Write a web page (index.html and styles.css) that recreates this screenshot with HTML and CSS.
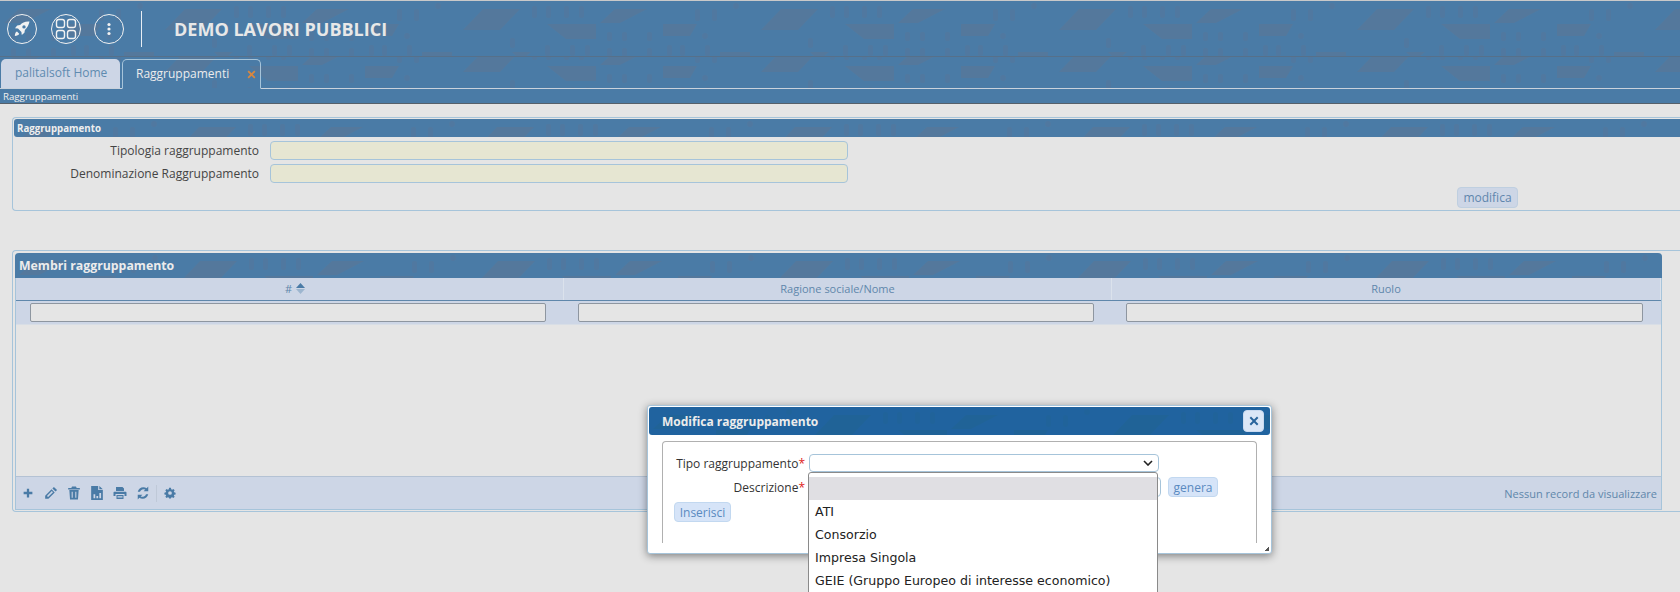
FILE: index.html
```html
<!DOCTYPE html>
<html lang="it">
<head>
<meta charset="utf-8">
<title>Raggruppamenti</title>
<link rel="stylesheet" href="styles.css">
</head>
<body>
<header class="topbar">
  <button class="round-btn" aria-label="Avvia">
    <svg viewBox="0 0 20 20" width="20" height="20"><path class="fill-white" fill-rule="evenodd" d="M17.5 2.5c-4.2-.4-7.2 1-9.4 3.6L5.2 6.6 3 9.2l3 .4 3.400 3.400.4 3 2.600-2.200.5-2.900c2.600-2.200 4-5.200 4.600-8.400zM12 6.200a1.700 1.700 0 1 1 0 3.400 1.700 1.700 0 0 1 0-3.400zM5 12.600c-1.400.6-2 2-2.200 4.400 2.400-.2 3.800-.8 4.400-2.200z"/></svg>
  </button>
  <button class="round-btn" aria-label="Menu">
    <svg viewBox="0 0 24 24" width="24" height="24"><g class="stroke-white"><rect x="2.500" y="2.500" width="8" height="8" rx="2.200"/><rect x="13.500" y="2.500" width="8" height="8" rx="2.200"/><rect x="2.500" y="13.500" width="8" height="8" rx="2.200"/><rect x="13.500" y="13.500" width="8" height="8" rx="2.200"/></g></svg>
  </button>
  <button class="round-btn" aria-label="Altro">
    <svg viewBox="0 0 20 20" width="20" height="20"><g class="fill-white"><circle cx="10" cy="5.500" r="1.600"/><circle cx="10" cy="10" r="1.600"/><circle cx="10" cy="14.500" r="1.600"/></g></svg>
  </button>
  <span class="topbar-divider"></span>
  <h1 class="app-title">DEMO LAVORI PUBBLICI</h1>
</header>

<nav class="tabbar">
  <a class="tab tab-idle">palitalsoft Home</a>
  <a class="tab tab-active">Raggruppamenti <svg class="tab-close" viewBox="0 0 10 10" width="9" height="9"><path d="M2 .6 5 3.600 8 .6 9.400 2 6.400 5l3 3L8 9.400l-3-3-3 3L.6 8l3-3-3-3z"/></svg></a>
</nav>
<div class="subbar">Raggruppamenti</div>

<main class="content">
  <section class="group">
    <div class="group-title">Raggruppamento</div>
    <div class="form-row"><label class="form-label">Tipologia raggruppamento</label><span class="readonly-input"></span></div>
    <div class="form-row"><label class="form-label">Denominazione Raggruppamento</label><span class="readonly-input"></span></div>
    <div class="group-actions"><button class="btn-muted">modifica</button></div>
  </section>

  <section class="grid-frame">
    <div class="grid">
      <div class="grid-title">Membri raggruppamento</div>
      <div class="grid-head">
        <div class="grid-col grid-col-sort"># <svg class="sort" viewBox="0 0 9 11" width="9" height="11"><path class="sort-up" d="M4.500 0 9 5H0z"/><path class="sort-down" d="M0 6h9l-4.500 5z"/></svg></div>
        <div class="grid-col">Ragione sociale/Nome</div>
        <div class="grid-col">Ruolo</div>
      </div>
      <div class="grid-filter">
        <div class="filter-cell"><span class="filter-input"></span></div>
        <div class="filter-cell"><span class="filter-input"></span></div>
        <div class="filter-cell"><span class="filter-input"></span></div>
      </div>
      <div class="grid-body"></div>
      <div class="grid-foot">
        <svg class="tool" viewBox="-2 -2 16 16" width="14" height="14"><path d="M4.700 1h2.600v3.700H11v2.600H7.300V11H4.700V7.300H1V4.700h3.700z"/></svg>
        <svg class="tool" viewBox="0 0 12 12" width="14" height="14"><path fill-rule="evenodd" d="M8.500.8l2.700 2.700-1.300 1.300-2.700-2.700zM6.500 2.800l2.700 2.700L3.800 11H1v-2.700zM2.500 8.500l1 1 4.200-4.200-1-1z"/></svg>
        <svg class="tool" viewBox="0 0 12 12" width="14" height="14"><path d="M4.300.5h3.400l.6 1.200H11v1.200H1V1.700h2.700zM2 3.500h8l-.6 8H2.600zM4 5v5h.9V5zm3.100 0v5H8V5z" fill-rule="evenodd"/></svg>
        <svg class="tool" viewBox="0 0 12 12" width="14" height="14"><path d="M1 0h6v3.500h4V12H1zM8 0l3 2.700H8zM3 7v3.500h1.500V7zm2.500 1.500v2H7v-2zM8 6v4.500h1.500V6z" fill-rule="evenodd"/></svg>
        <svg class="tool" viewBox="0 0 14 14" width="14" height="14"><path d="M3 1h6.500L11 2.500V5H3zM1.500 5.700h11c.6 0 1 .4 1 1V10H11.500V8H2.500v2H.5V6.700c0-.6.4-1 1-1zM3.500 9h7v4h-7zm1 1v.8h5V10zm0 1.400v.7h5v-.7z" fill-rule="evenodd"/></svg>
        <svg class="tool" viewBox="0 0 12 12" width="14" height="14"><path d="M1.500 5C2 2.700 4 1 6.300 1c1 0 2 .3 2.800.9L10.500.5v4h-4L8 3a3.500 3.500 0 0 0-4.600 2zM10.500 7c-.5 2.300-2.500 4-4.800 4-1 0-2-.3-2.800-.9L1.500 11.500v-4h4L4 9a3.500 3.500 0 0 0 4.600-2z"/></svg>
        <span class="tool-sep"></span>
        <svg class="tool" viewBox="-1.500 -1.500 15 15" width="14" height="14"><path d="M5 .5h2l.3 1.500 1 .4L9.600 1.600 11 3 10.100 4.300l.4 1 1.500.3v1.900l-1.500.3-.4 1 .9 1.300L9.600 11.400 8.300 10.500l-1 .4-.3 1.100H5l-.3-1.100-1-.4-1.300.9L1 10.100l.9-1.300-.4-1L0 7.500V5.600l1.500-.3.4-1L1 3 2.400 1.600l1.300.8 1-.4zM6 4a2 2 0 1 0 0 4 2 2 0 0 0 0-4z" fill-rule="evenodd"/></svg>
        <span class="foot-note">Nessun record da visualizzare</span>
      </div>
    </div>
  </section>
</main>

<div class="dialog">
  <div class="dialog-title">
    <span class="dialog-heading">Modifica raggruppamento</span>
    <button class="dialog-close" aria-label="Chiudi"><svg viewBox="0 0 10 10" width="10" height="10"><path d="M2 .6 5 3.600 8 .6 9.400 2 6.400 5l3 3L8 9.400l-3-3-3 3L.6 8l3-3-3-3z"/></svg></button>
  </div>
  <div class="dialog-box">
    <div class="dialog-row">
      <label class="dialog-label">Tipo raggruppamento<em>*</em></label>
      <span class="select-box"><svg viewBox="0 0 10 6" width="10" height="6"><path d="M1 1l4 4 4-4"/></svg></span>
    </div>
    <div class="dialog-row dialog-row-tall">
      <label class="dialog-label">Descrizione<em>*</em></label>
      <span class="text-box"></span>
      <button class="btn-light btn-genera">genera</button>
    </div>
    <div class="dialog-row-plain"><button class="btn-light btn-insert">Inserisci</button></div>
  </div>
  <span class="grip"></span>
  <ul class="dropdown">
    <li class="opt opt-selected">&nbsp;</li>
    <li class="opt">ATI</li>
    <li class="opt">Consorzio</li>
    <li class="opt">Impresa Singola</li>
    <li class="opt">GEIE (Gruppo Europeo di interesse economico)</li>
  </ul>
</div>
</body>
</html>
```
FILE: styles.css
```css
* { box-sizing: border-box; }
html, body { margin: 0; padding: 0; height: 592px; overflow: hidden; }
body {
  position: relative;
  background: #e5e5e5;
  font-family: "Open Sans", "Liberation Sans", sans-serif;
  font-size: 12px;
  color: #444;
}
button { font-family: inherit; cursor: pointer; }
.fill-white { fill: #f2f2f2; }
.stroke-white rect { fill: none; stroke: #f2f2f2; stroke-width: 1.4; }

.topbar, .tabbar, .group-title, .grid-title, .dialog-title {
  background-color: #4a7ba6;
  background-image: url("data:image/svg+xml,%3Csvg xmlns='http://www.w3.org/2000/svg' width='298' height='56'%3E%3Cg fill='%236a7085' fill-opacity='.3'%3E%3Cpath d='M185 8h37l-20 21h-37zM249 23h49v15h-30zM19 8h32L24 22H4zM67 23h34l-7 12H67zM214 51h19l-6 5h-8zM124 51h30v5h-30z'/%3E%3C/g%3E%3Cg fill='%236a7085' fill-opacity='.2'%3E%3Crect x='234' y='5' width='5' height='12' rx='2'/%3E%3Crect x='248' y='5' width='5' height='12' rx='2'/%3E%3Crect x='266' y='5' width='5' height='12' rx='2'/%3E%3Crect x='281' y='5' width='5' height='12' rx='2'/%3E%3Crect x='99' y='8' width='5' height='12' rx='2'/%3E%3Crect x='116' y='8' width='5' height='12' rx='2'/%3E%3Crect x='11' y='31' width='5' height='9' rx='2'/%3E%3Crect x='26' y='31' width='5' height='9' rx='2'/%3E%3Crect x='51' y='31' width='5' height='9' rx='2'/%3E%3Crect x='272' y='44' width='5' height='11' rx='2'/%3E%3Crect x='287' y='44' width='5' height='11' rx='2'/%3E%3Crect x='247' y='44' width='5' height='11' rx='2'/%3E%3Crect x='11' y='47' width='5' height='9' rx='2'/%3E%3Crect x='26' y='47' width='5' height='9' rx='2'/%3E%3Crect x='51' y='47' width='5' height='9' rx='2'/%3E%3Crect x='71' y='44' width='5' height='11' rx='2'/%3E%3Crect x='84' y='44' width='5' height='11' rx='2'/%3E%3Crect x='109' y='44' width='5' height='11' rx='2'/%3E%3Crect x='212' y='37' width='5' height='10' rx='2'/%3E%3Ccircle cx='109' cy='35' r='3'/%3E%3Ccircle cx='140' cy='5' r='3'/%3E%3C/g%3E%3C/svg%3E");
}

.topbar {
  height: 57px;
  border-top: 1px solid #c9c9c9;
  border-bottom: 1px solid #56708a;
  display: flex;
  align-items: center;
  padding-left: 7px;
  gap: 13.5px;
}
.round-btn {
  width: 30px;
  height: 30px;
  border: 1px solid #f2f2f2;
  border-radius: 50%;
  background: transparent;
  padding: 0;
  display: flex;
  align-items: center;
  justify-content: center;
}
.round-btn svg { display: block; }
.topbar-divider { width: 1px; height: 36px; background: #e8eef4; margin-left: 3.5px; }
.app-title {
  margin: 0 0 0 18.5px;
  font-size: 18px;
  font-weight: 700;
  color: #e8e8e8;
}

.tabbar {
  height: 32px;
  background-position: 0 -14px;
  border-bottom: 1px solid #c9d2dc;
  display: flex;
  align-items: flex-end;
  padding-left: 1px;
  gap: 2px;
}
.tab {
  height: 29px;
  border-radius: 5px 5px 0 0;
  font-size: 12px;
  line-height: 28px;
  display: block;
}
.tab-idle { width: 119px; background: #cdd6e6; color: #5f8bb0; padding-left: 14px; }
.tab-active {
  width: 139px;
  margin-bottom: -1px;
  height: 30px;
  border: 1px solid #a6c4da;
  border-bottom-color: #4a7ba6;
  color: #ececec;
  padding-left: 13px;
  white-space: nowrap;
}
.tab-close { fill: #d9873f; margin-left: 15px; vertical-align: -1px; }

.subbar {
  height: 15px;
  background: #4a7ba6;
  border-bottom: 1px solid #56606a;
  color: #f0f0f0;
  font-size: 9.7px;
  line-height: 16px;
  padding-left: 3px;
}

.content { padding: 13px 0 0 12px; }

.group {
  height: 94px;
  border: 1px solid #a6c4da;
  border-right: 0;
  border-radius: 4px 0 0 4px;
  padding: 1px 0 0 1px;
}
.group-title {
  height: 18px;
  border-radius: 3px 0 0 3px;
  color: #efefef;
  font-size: 9.7px;
  font-weight: 700;
  line-height: 19px;
  padding-left: 3px;
}
.form-row { display: flex; align-items: center; height: 19px; margin-top: 4px; }
.form-label { width: 245px; text-align: right; color: #444; }
.readonly-input {
  width: 578px;
  height: 19px;
  margin-left: 11px;
  background: #e6e6d2;
  border: 1px solid #a6c4da;
  border-radius: 4px;
}
.group-actions { display: flex; justify-content: flex-end; padding: 4px 162px 0 0; }
.btn-muted {
  height: 21px;
  width: 61px;
  padding: 0;
  background: #cdd6e6;
  border: 1px solid #bfcfe0;
  border-radius: 4px;
  color: #5f86ad;
  font-size: 12px;
}

.grid-frame {
  margin-top: 39px;
  height: 262px;
  border: 1px solid #a6c4da;
  border-right: 0;
  border-radius: 4px 0 0 4px;
  padding: 2px 0 1px 2px;
}
.grid {
  width: 1647px;
  height: 257px;
  border-radius: 4px 4px 0 0;
  border-right: 1px solid #a6c4da;
  border-bottom: 1px solid #a6c4da;
  border-left: 1px solid #a6c4da;
  display: flex;
  flex-direction: column;
}
.grid-title {
  height: 25px;
  margin-left: -1px;
  margin-right: -1px;
  border-radius: 4px 4px 0 0;
  color: #ececec;
  font-size: 12.3px;
  font-weight: 700;
  line-height: 25px;
  padding-left: 4px;
}
.grid-head {
  height: 23px;
  display: grid;
  grid-template-columns: 548px 548px 1fr;
  background: #cdd6e6;
  border-bottom: 1px solid #5f87ab;
}
.grid-col {
  text-align: center;
  color: #5f87ab;
  font-size: 11px;
  line-height: 22px;
  border-right: 1px solid #dbe2ec;
}
.grid-col-sort { padding-left: 11px; }
.sort { vertical-align: -1px; margin-left: 1px; }
.sort-up { fill: #4a7ba6; }
.sort-down { fill: #9db6cf; }
.grid-filter {
  height: 23px;
  display: grid;
  grid-template-columns: 548px 548px 1fr;
  background: #cdd6e6;
}
.filter-cell { padding: 2px 18px 2px 14px; }
.filter-input {
  display: block;
  height: 19px;
  background: #e5e5e5;
  border: 1px solid #8e96a0;
  border-radius: 2px;
}
.grid-body { flex: 1; border-top: 1px solid #d8dee6; }
.grid-foot {
  height: 33px;
  background: #cdd6e6;
  border-top: 1px solid #b4c2d4;
  display: flex;
  align-items: center;
  padding: 0 4px 0 5px;
  gap: 9px;
}
.tool { fill: #4a7ba6; flex: none; }
.tool-sep { width: 1px; height: 17px; background: #bfc9d8; margin: 0 -3px; }
.foot-note { margin-left: auto; color: #5f87ab; font-size: 11px; }

.dialog {
  position: absolute;
  left: 647px;
  top: 405px;
  width: 625px;
  height: 149px;
  background: #fff;
  border: 1px solid #a6c4da;
  border-radius: 3px;
  box-shadow: 0 2px 8px rgba(0, 0, 0, .45);
  padding: 1px 1px 0 1px;
}
.dialog-title {
  height: 28px;
  background-color: #20639f;
  background-blend-mode: darken;
  border-radius: 3px;
  color: #ececec;
  font-size: 12px;
  font-weight: 700;
  padding: 0 6px 0 13px;
  display: flex;
  align-items: center;
  justify-content: space-between;
}
.dialog-heading { padding-top: 1px; }
.dialog-close {
  width: 21px;
  height: 22px;
  padding: 0;
  background: #dbe7f7;
  border: 1px solid #c9daf0;
  border-radius: 4px;
  display: flex;
  align-items: center;
  justify-content: center;
}
.dialog-close svg { fill: #2a659c; }
.dialog-box {
  margin: 6px 13px 0 13px;
  height: 102px;
  border: 1px solid #b0b0b0;
  border-bottom: 0;
  border-radius: 4px 4px 0 0;
  padding: 12px 0 0 0;
}
.dialog-row { display: flex; align-items: center; height: 18px; margin-bottom: 5px; }
.dialog-row-tall { height: 20px; margin-bottom: 0; }
.dialog-label { width: 142px; text-align: right; color: #333; flex: none; }
.dialog-label em { color: #e02020; font-style: normal; }
.select-box {
  margin-left: 4px;
  width: 350px;
  height: 18px;
  border: 1px solid #a6c4da;
  border-radius: 4px;
  background: #fff;
  display: flex;
  align-items: center;
  justify-content: flex-end;
  padding-right: 5px;
}
.select-box svg { fill: none; stroke: #222; stroke-width: 1.6; }
.text-box {
  margin-left: 4px;
  width: 352px;
  height: 20px;
  border: 1px solid #a6c4da;
  border-radius: 4px;
}
.btn-light {
  height: 20px;
  padding: 0;
  background: #d6e4f8;
  border: 1px solid #c2d8f0;
  border-radius: 4px;
  color: #5a8ac0;
  font-size: 12px;
}
.btn-genera { width: 50px; margin-left: 7px; }
.btn-insert { width: 57px; }
.dialog-row-plain { padding: 5px 0 0 11px; }
.grip {
  position: absolute;
  right: 2px;
  bottom: 2px;
  width: 4px;
  height: 4px;
  background: linear-gradient(135deg, transparent 50%, #555 50%);
}
.dropdown {
  position: absolute;
  left: 160px;
  top: 66px;
  width: 350px;
  height: 130px;
  margin: 0;
  padding: 4px 0 0 0;
  list-style: none;
  background: #fff;
  border: 1px solid #8a8a8a;
  border-radius: 3px 3px 0 0;
}
.opt {
  height: 23px;
  line-height: 23px;
  padding-left: 6px;
  font-family: "DejaVu Sans", sans-serif;
  font-size: 12.6px;
  color: #222;
}
.opt-selected { background: #e0dfe3; }
```
